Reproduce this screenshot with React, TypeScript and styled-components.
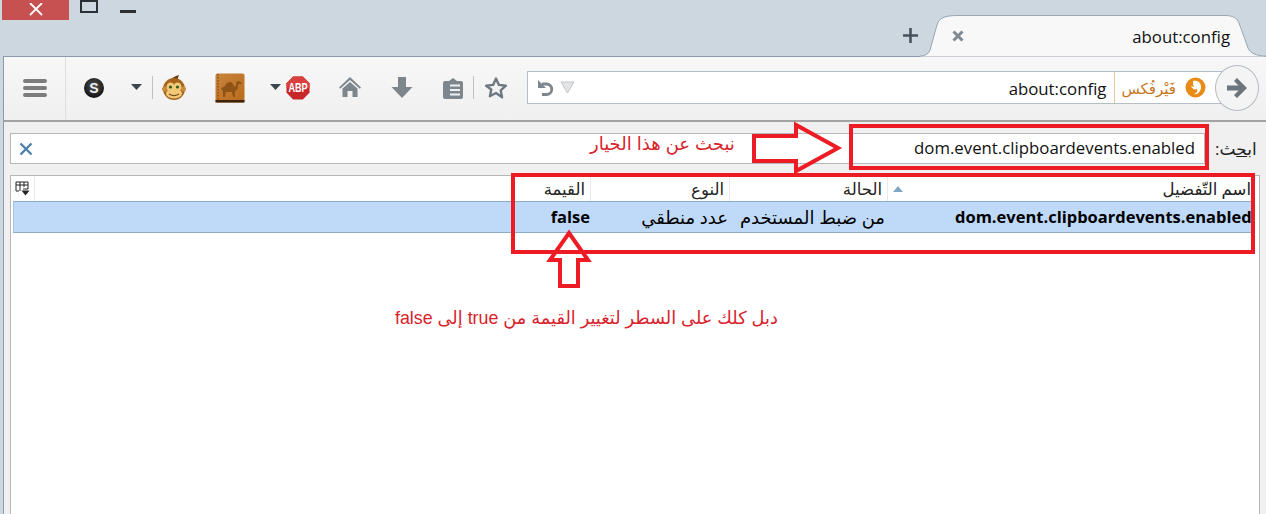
import React, { FC } from 'react';
import styled, { createGlobalStyle } from 'styled-components';

const RED = '#ed1c24';
const UI_FONT = "'Open Sans', 'DejaVu Sans', sans-serif";

const GlobalStyle = createGlobalStyle`
  html, body {
    margin: 0;
    padding: 0;
    background: #cdd7e0;
  }
  body {
    font-family: ${UI_FONT};
  }
`;

const Page = styled.div`
  position: relative;
  width: 1266px;
  height: 514px;
  overflow: hidden;
  background: #cdd7e0;
`;

const TitleBar = styled.div`
  display: flex;
  justify-content: space-between;
  height: 56px;
`;

const WindowControls = styled.div`
  display: flex;
  align-items: flex-start;
  padding-left: 2px;
`;

const CloseButton = styled.div`
  display: flex;
  align-items: center;
  justify-content: center;
  width: 67px;
  height: 20px;
  background: #c75050;
`;

const MaxButton = styled.div`
  box-sizing: border-box;
  width: 18px;
  height: 13px;
  margin-left: 11px;
  border: 2px solid #2b3036;
`;

const MinButton = styled.div`
  width: 16px;
  height: 3px;
  margin: 10px 0 0 22px;
  background: #2b3036;
`;

const TabStrip = styled.div`
  display: flex;
  align-items: flex-end;
`;

const NewTab = styled.div`
  display: flex;
  align-items: center;
  justify-content: center;
  width: 20px;
  height: 41px;
`;

const Tab = styled.div`
  position: relative;
  display: flex;
  align-items: center;
  justify-content: space-between;
  box-sizing: border-box;
  width: 346px;
  height: 41px;
  padding: 0 36px 0 32px;
  font-size: 16.800px;
  color: #111;
`;

const TabShape = styled.svg`
  position: absolute;
  left: 0;
  top: 0;
`;

const TabItem = styled.span`
  position: relative;
  display: flex;
`;

const TabTitle = styled(TabItem)`
  padding-top: 2px;
`;

const Toolbar = styled.div`
  display: flex;
  align-items: center;
  box-sizing: border-box;
  height: 66px;
  margin-left: 3px;
  padding-bottom: 2px;
  border-left: 1px solid #8b9aa8;
  border-top: 1px solid #8b9aa8;
  border-bottom: 2px solid #a3a3a3;
  background: linear-gradient(#f7f7f7, #f0f0f0);
`;

const Slot = styled.div<{ $w: number; $ml?: number }>`
  display: flex;
  flex: none;
  align-items: center;
  justify-content: center;
  width: ${(p) => p.$w}px;
  margin-left: ${(p) => p.$ml || 0}px;

  svg {
    flex: none;
  }
`;

const TallDivider = styled.div`
  flex: none;
  align-self: stretch;
  width: 1px;
  margin-bottom: -2px;
  background: #dcdfe2;
`;

const ShortDivider = styled.div<{ $h: number }>`
  flex: none;
  width: 1px;
  height: ${(p) => p.$h}px;
  background: #bdc1c4;
`;

const UrlBar = styled.div`
  display: flex;
  flex: none;
  align-items: center;
  box-sizing: border-box;
  width: 695px;
  height: 33px;
  padding: 0 15px 0 9px;
  margin-left: 9px;
  border: 1px solid #b5bdc5;
  background: #fff;
`;

const UrlText = styled.span`
  margin-left: auto;
  padding-top: 2px;
  font-size: 16.800px;
  color: #111;
`;

const Identity = styled.span`
  display: flex;
  align-items: center;
  align-self: stretch;
  gap: 9px;
  margin-left: 8px;
  padding-left: 6px;
  border-left: 1px solid #e7c8a0;
  font-size: 15px;
  color: #c8761d;
`;

const GoButton = styled.div`
  display: flex;
  flex: none;
  align-items: center;
  justify-content: center;
  box-sizing: border-box;
  width: 44px;
  height: 46px;
  margin-left: -7px;
  border: 1px solid #b5bbc2;
  border-radius: 50%;
  background: #f4f4f4;
`;

const Content = styled.div`
  box-sizing: border-box;
  height: 392px;
  margin-left: 3px;
  padding: 11px 0 0 6px;
  border-left: 1px solid #8b9aa8;
  background: #f0f0f0;
`;

const SearchRow = styled.div`
  display: flex;
  align-items: center;
  height: 31px;
`;

const SearchField = styled.div`
  display: flex;
  align-items: center;
  justify-content: space-between;
  box-sizing: border-box;
  width: 1195px;
  height: 31px;
  padding: 0 9px 0 8px;
  border: 1px solid #b4b8bc;
  background: #fff;
  font-size: 16.800px;
  color: #111;
`;

const SearchValue = styled.span`
  padding-bottom: 2px;
`;

const SearchLabel = styled.label`
  margin-left: 10px;
  font-size: 17px;
  color: #222;
`;

const Tree = styled.div`
  box-sizing: border-box;
  width: 1250px;
  height: 340px;
  margin-top: 11px;
  border: 1px solid #b4b8bc;
  background: #fff;
`;

const TREE_COLUMNS = '24px 556px 139px 158px 364px';

const TreeHeader = styled.div`
  display: grid;
  grid-template-columns: ${TREE_COLUMNS};
  height: 25px;
`;

const HeaderCell = styled.div`
  display: flex;
  align-items: center;
  justify-content: space-between;
  box-sizing: border-box;
  padding: 0 5px;
  border-right: 1px solid #e8ebee;
  font-size: 16.500px;
  color: #222;
`;

const PickerCell = styled(HeaderCell)`
  padding: 0 0 0 4px;
`;

const NameHeaderCell = styled(HeaderCell)`
  padding: 0 1px 0 5px;
  border-right: none;
`;

const ColumnLabel = styled.span`
  margin-left: auto;
`;

const TreeRow = styled.div`
  display: grid;
  grid-template-columns: ${TREE_COLUMNS};
  box-sizing: border-box;
  width: 1239px;
  height: 32px;
  margin-left: 2px;
  border: 1px solid #8eaacb;
  border-left-color: #a9c3e2;
  background: #bfdaf9;
`;

const RowCell = styled.div<{ $bold?: boolean; $pad: number }>`
  display: flex;
  align-items: center;
  justify-content: flex-end;
  padding-right: ${(p) => p.$pad}px;
  padding-bottom: ${(p) => (p.$bold ? 2 : 0)}px;
  overflow: hidden;
  white-space: nowrap;
  font-size: ${(p) => (p.$bold ? 16.5 : 18)}px;
  font-weight: ${(p) => (p.$bold ? 700 : 400)};
  color: #000;
`;

const NameCell = styled(RowCell)`
  justify-content: flex-start;
  padding-right: 0;
  padding-left: 64px;
`;

const Marks = styled.svg`
  position: absolute;
  left: 0;
  top: 0;
  pointer-events: none;
`;

const Note = styled.div<{ $x: number; $y: number; $size: number }>`
  position: absolute;
  left: ${(p) => p.$x}px;
  top: ${(p) => p.$y}px;
  font-family: 'Liberation Sans', 'DejaVu Sans', sans-serif;
  font-size: ${(p) => p.$size}px;
  line-height: 24px;
  white-space: nowrap;
  color: #d8232c;
`;

const CoinIcon: FC = () => (
  <svg width="22" height="22" viewBox="0 0 22 22">
    <defs>
      <radialGradient id="coin" cx="0.5" cy="0.4" r="0.6">
        <stop offset="0" stopColor="#555" />
        <stop offset="1" stopColor="#111" />
      </radialGradient>
    </defs>
    <circle cx="11" cy="11" r="10" fill="url(#coin)" />
    <text x="11" y="16" textAnchor="middle" fontSize="14" fontWeight="700" fontFamily="Liberation Sans" fill="#eee">S</text>
  </svg>
);

const Caret: FC = () => (
  <svg width="12" height="7" viewBox="0 0 12 7">
    <path d="M0 0h11L5.500 6z" fill="#3b4650" />
  </svg>
);

const MonkeyIcon: FC = () => (
  <svg width="24" height="26" viewBox="0 0 24 26">
    <path d="M8 5c3-3 6-4 9-5-1 2-1 4-2 6z" fill="#6b3a12" />
    <circle cx="12" cy="14" r="11" fill="#a5641c" />
    <circle cx="2.500" cy="14" r="2.500" fill="#c98c3f" />
    <circle cx="21.500" cy="14" r="2.500" fill="#c98c3f" />
    <ellipse cx="8.500" cy="12" rx="4" ry="4.500" fill="#f0c878" />
    <ellipse cx="15.500" cy="12" rx="4" ry="4.500" fill="#f0c878" />
    <ellipse cx="12" cy="18.500" rx="8" ry="5" fill="#f0c878" />
    <circle cx="8.500" cy="12" r="1.600" fill="#2f5f18" />
    <circle cx="15.500" cy="12" r="1.600" fill="#2f5f18" />
    <path d="M7 19c3 2 7 2 10 0" fill="none" stroke="#7a4a18" strokeWidth="1.200" />
  </svg>
);

const BookIcon: FC = () => (
  <svg width="30" height="30" viewBox="0 0 30 30">
    <defs>
      <linearGradient id="book" x1="0" y1="0" x2="1" y2="1">
        <stop offset="0" stopColor="#c9843c" />
        <stop offset="1" stopColor="#b86a1c" />
      </linearGradient>
    </defs>
    <rect x="0.500" y="0.500" width="29" height="29" rx="2" fill="url(#book)" />
    <rect x="0.500" y="27" width="29" height="2.500" fill="#3d2208" />
    <path d="M3 1v26" stroke="#7d4a14" strokeWidth="1.200" strokeDasharray="1.500 1.500" />
    <path d="M6 15c2-1 3-1 4-2 1-3 3-4 5-4 2 0 3 2 4 4 1 1 2 1 2-1 0-2 0-3 2-4l3 1 1 2h-3c-1 0-1 2-1 4-1 2-2 3-3 3v6h-2l-1-5h-6l-1 5h-2v-6c-1-1-2-2-2-3z" fill="#8f5415" />
  </svg>
);

const AbpIcon: FC = () => (
  <svg width="24" height="24" viewBox="0 0 25 25">
    <path d="M7.500 0.500h10l7 7v10l-7 7h-10l-7-7v-10z" fill="#c8272a" />
    <path d="M7.500 0.500h10l7 7v5h-24v-5z" fill="#d9403f" />
    <text x="12.500" y="17" textAnchor="middle" fontSize="13" fontWeight="700" fontFamily="Liberation Sans" fill="#fff" textLength="20" lengthAdjust="spacingAndGlyphs">ABP</text>
  </svg>
);

const HomeIcon: FC = () => (
  <svg width="22" height="21" viewBox="0 0 22 21">
    <path d="M11 0L0 10.500l1.200 1.300L11 3l9.800 8.800 1.200-1.300z" fill="#7d868d" />
    <path d="M3.500 11.500L11 5l7.500 6.500V20h-5v-6h-5v6h-5z" fill="#7d868d" />
  </svg>
);

const DownloadIcon: FC = () => (
  <svg width="22" height="21" viewBox="0 0 22 21">
    <path d="M7 0h8v10h6.500L11 21 .5 10H7z" fill="#7d868d" />
  </svg>
);

const ClipboardIcon: FC = () => (
  <svg width="22" height="22" viewBox="0 0 22 22">
    <path d="M3 4h4l4-3 4 3h4a2 2 0 0 1 2 2v14a2 2 0 0 1-2 2H3a2 2 0 0 1-2-2V6a2 2 0 0 1 2-2z" fill="#7d868d" />
    <path d="M8 8.500h10M8 13h10M8 17.500h10" stroke="#eef0f1" strokeWidth="1.800" />
  </svg>
);

const StarIcon: FC = () => (
  <svg width="24" height="24" viewBox="0 0 24 24">
    <path d="M12 2.500l2.900 6.400 7 .8-5.200 4.700 1.400 6.900L12 17l-6.100 3.300 1.400-6.900L2.100 9.700l7-.8z" fill="none" stroke="#6f787f" strokeWidth="2.400" strokeLinejoin="round" />
  </svg>
);

const ReloadIcon: FC = () => (
  <svg width="18" height="18" viewBox="0 0 18 18">
    <path d="M5 5H9.500A5 5 0 0 1 9.500 15.500H5" fill="none" stroke="#7d868d" strokeWidth="2.800" />
    <path d="M1 1l8 8H1z" fill="#7d868d" />
  </svg>
);

const DropMarker: FC = () => (
  <svg width="15" height="13" viewBox="0 0 15 13">
    <path d="M1 1h13L7.500 12z" fill="#e2e5e7" stroke="#c1c6ca" />
  </svg>
);

const FoxIcon: FC = () => (
  <svg width="21" height="21" viewBox="0 0 21 21">
    <circle cx="10.500" cy="10.500" r="10" fill="#e98b17" />
    <path d="M8 4c4-1 8 1 8 6s-4 8-7 7c3-1 4-3 3-5-2 1-5 0-6-3l3 1-1-3z" fill="#fff" />
  </svg>
);

const GoArrow: FC = () => (
  <svg width="22" height="22" viewBox="0 0 22 22">
    <path d="M11 1l10 10-10 10-3-3 4.500-4.500H1V8.500h11.500L8 4z" fill="#6d757c" />
  </svg>
);

const ColumnPicker: FC = () => (
  <svg width="15" height="15" viewBox="0 0 15 15">
    <path d="M1 1h12v7H8M1 1v9h3M1 4h12M5 1v9M9 1v5" fill="none" stroke="#222" />
    <path d="M6.500 9.500h8l-4 5z" fill="#222" />
  </svg>
);

const TabCloseIcon: FC = () => (
  <svg width="12" height="12" viewBox="0 0 12 12">
    <path d="M1.500 1.500l9 9M10.500 1.500l-9 9" stroke="#7f8a94" strokeWidth="3" />
  </svg>
);

const App: FC = () => (
  <Page>
    <GlobalStyle />
    <TitleBar>
      <WindowControls>
        <CloseButton>
          <svg width="14" height="14" viewBox="0 0 14 14">
            <path d="M1 0l12 12M13 0L1 12" stroke="#fff" strokeWidth="1.800" />
          </svg>
        </CloseButton>
        <MaxButton />
        <MinButton />
      </WindowControls>
      <TabStrip>
        <NewTab>
          <svg width="15" height="15" viewBox="0 0 15 15">
            <path d="M7.500 0v15M0 7.500h15" stroke="#46525e" strokeWidth="2.600" />
          </svg>
        </NewTab>
        <Tab>
          <TabShape width="346" height="42" viewBox="0 0 346 42">
            <path
              d="M0 41C6 41 9 38 10 35L17 10C19 3 24 0.500 38 0.500H305C313 0.500 317 3 319 8L328 33C330 38 336 41 346 41V42H0z"
              fill="#f8f8f8"
              stroke="#9aa6b1"
            />
          </TabShape>
          <TabItem><TabCloseIcon /></TabItem>
          <TabTitle>about:config</TabTitle>
        </Tab>
      </TabStrip>
    </TitleBar>

    <Toolbar>
      <Slot $w={61}>
        <svg width="24" height="20" viewBox="0 0 24 20">
          <path d="M2 3h20M2 10h20M2 17h20" stroke="#7d7d7d" strokeWidth="4" strokeLinecap="round" />
        </svg>
      </Slot>
      <TallDivider />
      <Slot $w={56}><CoinIcon /></Slot>
      <Slot $w={30}><Caret /></Slot>
      <ShortDivider $h={23} />
      <Slot $w={42}><MonkeyIcon /></Slot>
      <Slot $w={69}><BookIcon /></Slot>
      <Slot $w={21} $ml={1}><Caret /></Slot>
      <Slot $w={24}><AbpIcon /></Slot>
      <Slot $w={44} $ml={18}><HomeIcon /></Slot>
      <Slot $w={60}><DownloadIcon /></Slot>
      <Slot $w={41}><ClipboardIcon /></Slot>
      <ShortDivider $h={23} />
      <Slot $w={44}><StarIcon /></Slot>
      <UrlBar>
        <ReloadIcon />
        <Slot $w={24}><DropMarker /></Slot>
        <UrlText>about:config</UrlText>
        <Identity>
          <span dir="rtl">فَيْرفُكس</span>
          <FoxIcon />
        </Identity>
      </UrlBar>
      <GoButton><GoArrow /></GoButton>
    </Toolbar>

    <Content>
      <SearchRow>
        <SearchField>
          <svg width="14" height="14" viewBox="0 0 14 14">
            <path d="M1.500 1.500l11 11M12.500 1.500l-11 11" stroke="#4f81ab" strokeWidth="2.400" />
          </svg>
          <SearchValue>dom.event.clipboardevents.enabled</SearchValue>
        </SearchField>
        <SearchLabel dir="rtl">اب<u>ح</u>ث:</SearchLabel>
      </SearchRow>
      <Tree>
        <TreeHeader>
          <PickerCell><ColumnPicker /></PickerCell>
          <HeaderCell><ColumnLabel dir="rtl">القيمة</ColumnLabel></HeaderCell>
          <HeaderCell><ColumnLabel dir="rtl">النوع</ColumnLabel></HeaderCell>
          <HeaderCell><ColumnLabel dir="rtl">الحالة</ColumnLabel></HeaderCell>
          <NameHeaderCell>
            <svg width="10" height="6" viewBox="0 0 10 6">
              <path d="M5 0l5 6H0z" fill="#7fa6c4" />
            </svg>
            <ColumnLabel dir="rtl">اسم التّفضيل</ColumnLabel>
          </NameHeaderCell>
        </TreeHeader>
        <TreeRow>
          <RowCell $pad={0} />
          <RowCell $bold $pad={4}>false</RowCell>
          <RowCell $pad={5}><span dir="rtl">عدد منطقي</span></RowCell>
          <RowCell $pad={6}><span dir="rtl">من ضبط المستخدم</span></RowCell>
          <NameCell $bold $pad={0}>dom.event.clipboardevents.enabled</NameCell>
        </TreeRow>
      </Tree>
    </Content>

    <Marks width="1266" height="514" viewBox="0 0 1266 514">
      <g fill="none" stroke={RED} strokeWidth="4" strokeLinejoin="miter">
        <rect x="851" y="126" width="356" height="42" />
        <rect x="513" y="175" width="740" height="77" />
        <path d="M754 136H796V125L838 148L796 171V161H754z" />
        <path d="M569 233L588 260H578V286H560V260H550z" />
      </g>
    </Marks>
    <Note $x={590} $y={132} $size={18} dir="rtl">نبحث عن هذا الخيار</Note>
    <Note $x={395} $y={306} $size={17.8} dir="rtl">دبل كلك على السطر لتغيير القيمة من true إلى false</Note>
  </Page>
);

export default App;
